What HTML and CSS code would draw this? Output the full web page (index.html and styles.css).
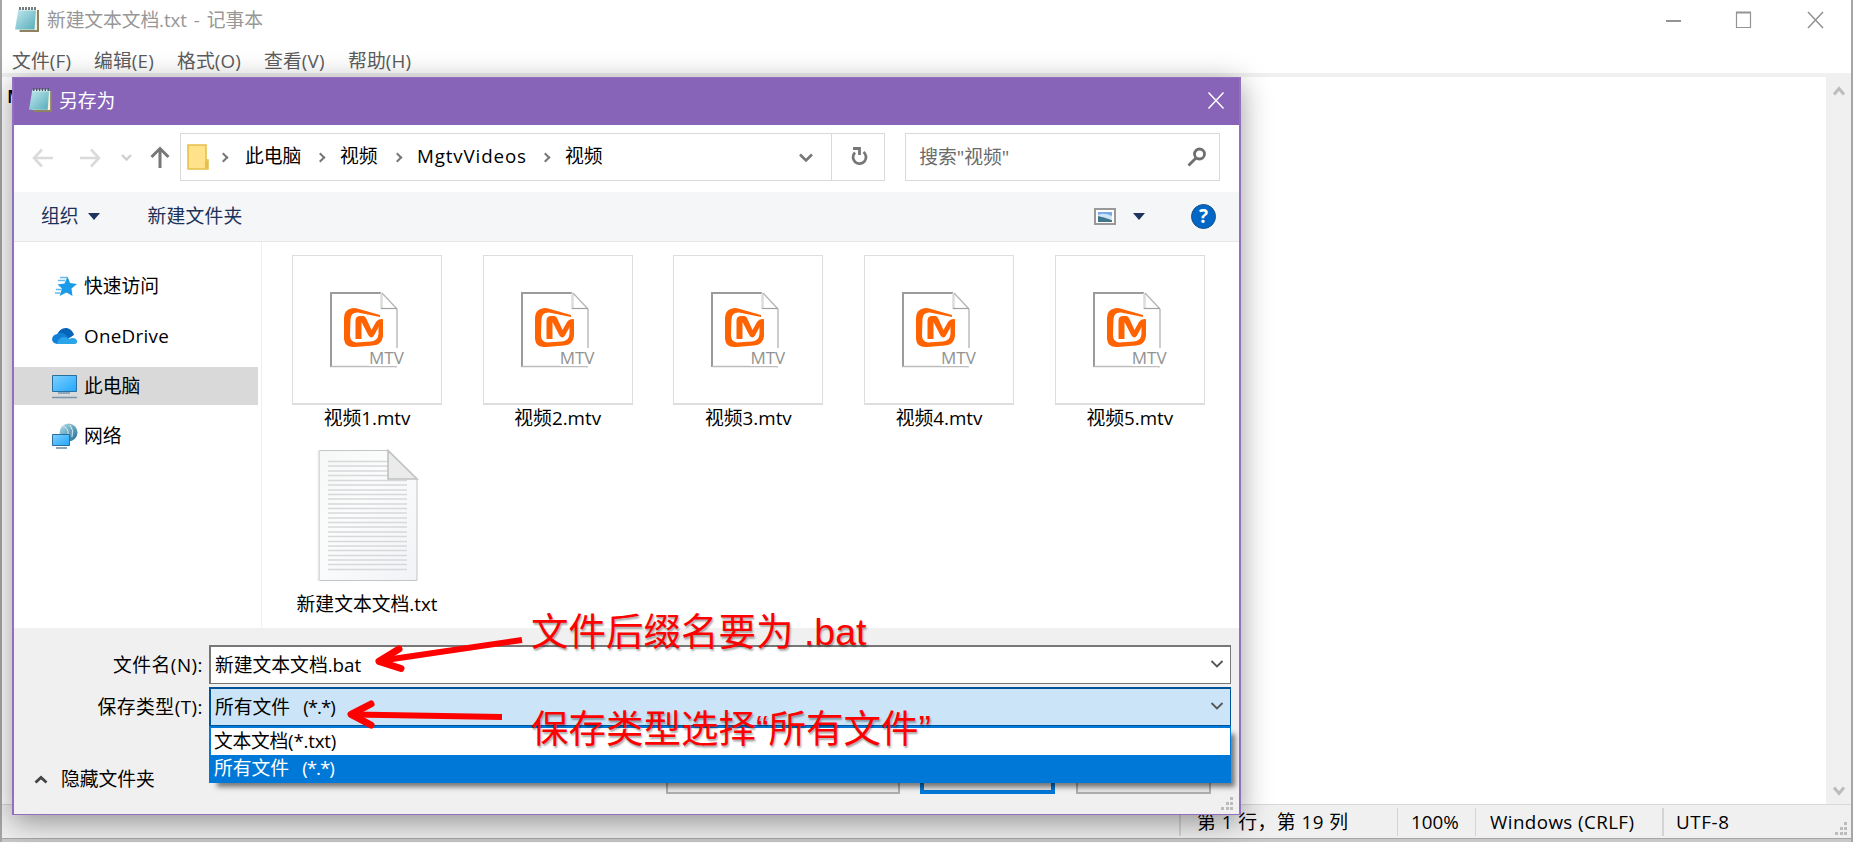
FILE: index.html
```html
<!DOCTYPE html>
<html lang="zh-CN">
<head>
<meta charset="utf-8">
<title>新建文本文档.txt - 记事本</title>
<link rel="stylesheet" href="styles.css">
</head>
<body>
<svg class="defs" width="0" height="0">
  <linearGradient id="pad" x1="0" x2="1" y1="0" y2="1"><stop offset="0" stop-color="#c4e9ee"/><stop offset="1" stop-color="#56adbb"/></linearGradient>
  <linearGradient id="scr" x1="0" x2="1" y1="0" y2="1"><stop offset="0" stop-color="#7fd0ff"/><stop offset="1" stop-color="#22a7fb"/></linearGradient>
  <linearGradient id="paper" x1="0" x2="1" y1="0" y2="1"><stop offset="0" stop-color="#f6f7f7"/><stop offset=".4" stop-color="#fbfcfc"/><stop offset="1" stop-color="#f1f3f6"/></linearGradient>
  <linearGradient id="globe" x1="0" x2="1" y1="0" y2="1"><stop offset="0" stop-color="#b8e3ec"/><stop offset="1" stop-color="#1b6b93"/></linearGradient>
  <symbol id="notepad" viewBox="0 0 26 26">
    <path d="M7 3h18v22H5.500z" fill="#8f8262"/>
    <path d="M7 3h16v20H4z" fill="#f3efdc"/>
    <path d="M4.500 2h17.500l-1.500 20.500H1z" fill="url(#pad)"/>
    <path d="M5 2.500h17" stroke="#eef6f6" stroke-width="2"/>
    <path d="M6 0v3M9 0v3M12 0v3M15 0v3M18 0v3M21 0v3" stroke="#46545a" stroke-width="1.500"/>
  </symbol>
  <symbol id="mtv" viewBox="0 0 80 78">
    <path d="M51 1H1v74" fill="none" stroke="#9b9b9b" stroke-width="2"/>
    <path d="M1 74.500h65v1M67 17v41" fill="none" stroke="#bdbdbd" stroke-width="1.500"/>
    <path d="M51.500 1v16" stroke="#dcdcdc" stroke-width="2.500"/>
    <path d="M52 1l15 16" stroke="#b5b5b5" stroke-width="1.200"/>
    <path d="M51 16.500h16" stroke="#a0a0a0" stroke-width="1.200"/>
    <g fill="#ff6200">
      <path d="M21 16.500Q24 15.500 29 17L50 23V25L28 20.500Q21 20 20.500 27L20 43Q20 50 26 50.500L41 49.500Q48 49 48.500 42V33L53 27V44Q52 53 43 53.500L25 55Q15 56 14 47V26Q14 18 21 16.500z"/>
      <path d="M25.500 47V28Q26 24 30 24H33.500Q35.500 24.500 36.500 27L41.500 38L46 30Q48.500 26.500 53 27L44 43.500Q41.500 47.500 38.500 43.500L31.500 30V47z"/>
    </g>
  </symbol>
</svg>

<main class="notepad">
  <header class="title">
    <svg class="title-icon" width="26" height="26"><use href="#notepad"/></svg>
    <span class="title-text">新建文本文档.txt<span class="dash">-</span>记事本</span>
    <svg class="win-controls" width="170" height="20" fill="none" stroke="#949494">
      <path d="M6 11h15" stroke-width="2"/><path d="M76.500 17.500V2.500h14v15z" stroke-width="1.200"/><path d="M76 2.500h15" stroke-width="2"/><path d="M148 2l15 16M163 2l-15 16" stroke-width="1.600"/>
    </svg>
  </header>
  <nav class="menu"><span>文件(F)</span><span>编辑(E)</span><span>格式(O)</span><span>查看(V)</span><span>帮助(H)</span></nav>
  <section class="editor">
    <div class="doc">M</div>
    <div class="scroll">
      <svg width="12" height="11" fill="none" stroke="#bcbcbc" stroke-width="3"><path d="M1 9.500l5-6 5 6"/></svg>
      <svg width="12" height="11" fill="none" stroke="#bcbcbc" stroke-width="3"><path d="M1 1.500l5 6 5-6"/></svg>
    </div>
  </section>
  <footer class="status"><span class="pos">第 1 行，第 19 列</span><span class="zoom">100%</span><span class="eol">Windows (CRLF)</span><span class="enc">UTF-8</span>
    <svg class="grip" width="13" height="13" fill="#bcbcbc"><path d="M9 0h3v3H9zM5 5h3v3H5zM9 5h3v3H9zM0 10h3v3H0zM5 10h3v3H5zM9 10h3v3H9z"/></svg>
  </footer>
</main>

<section class="dialog">
  <header class="dlg-title">
    <svg width="25" height="25"><use href="#notepad"/></svg><span>另存为</span>
    <svg class="dlg-close" width="16" height="17" stroke="#fff" stroke-width="1.500"><path d="M.500 .500l15 16M15.500 .500l-15 16"/></svg>
  </header>
  <div class="address-row">
    <svg class="arrows" width="140" height="24" fill="none">
      <g stroke="#dadada" stroke-width="2.600"><path d="M2 12h19M10 3.500L2 12l8 8.500"/><path d="M48 12h19M59 3.500l8 8.500-8 8.500"/></g>
      <path d="M90 9l4.500 4.500L99 9" stroke="#cfcfcf" stroke-width="2.400"/>
      <path d="M128 22V3M119.500 11L128 2.500l8.500 8.500" stroke="#777" stroke-width="3"/>
    </svg>
    <div class="path">
      <svg class="folder" width="22" height="26"><path d="M1 1h18v15h2v9H1z" fill="#ffe28a" stroke="#e9bf4b" stroke-width="1.600"/><path d="M18 24v-7h3v8z" fill="#e9bf4b"/></svg>
      <i class="crumb"></i><span class="c1">此电脑</span><i class="crumb"></i><span class="c2">视频</span><i class="crumb"></i><span class="c3">MgtvVideos</span><i class="crumb"></i><span>视频</span>
      <svg class="drop" width="16" height="10" fill="none" stroke="#777" stroke-width="2.600"><path d="M2 1.500l6 6 6-6"/></svg>
    </div>
    <div class="refresh"><svg width="17" height="20" fill="none" stroke="#777" stroke-width="2.800"><path d="M12.500 5A6.500 6.500 0 1 1 4 5.500"/><path d="M2 1.500h6.500V8"/></svg></div>
    <div class="search"><span>搜索"视频"</span><svg width="20" height="20" fill="none" stroke="#6f6f6f" stroke-width="2.800"><circle cx="12.500" cy="7" r="5"/><path d="M9 11L1.500 18.500"/></svg></div>
  </div>
  <div class="toolbar">
    <span>组织</span><i class="tri"></i><span class="newdir">新建文件夹</span>
    <svg class="view" width="22" height="17"><path d="M1 1h20v15H1z" fill="#fff" stroke="#999" stroke-width="2"/><path d="M4 4h14v5H4z" fill="#76a9ee"/><path d="M4 7q5-3 14 1v3H4z" fill="#cfe4f4"/><path d="M4 8q5 1 14 4v2H4z" fill="#40758b"/></svg>
    <i class="tri view-tri"></i><b class="help">?</b>
  </div>
  <div class="browser">
    <aside class="side">
      <div class="row"><svg width="26" height="26"><path d="M15.500 3.500l2.500 6.500 7 1-5.500 4.500 1 7.500-6-3.500-7 3.500 2.500-7.500-4.500-4 7-1z" fill="#1a9bea"/><path d="M8 4.500h7M6 7.500h7M4 16.500h6M3 20h5" stroke="#65b9e9" stroke-width="1.300"/></svg>快速访问</div>
      <div class="row one"><svg width="26" height="26"><path d="M5 13C7 3 19 2 22 12l-8 5z" fill="#0864b8"/><path d="M5 21C-2 20-1 12 5 11c6-4 12 2 14 10z" fill="#127fd6"/><path d="M5 21c1-7 8-9 12-5 7-4 11 4 6 5z" fill="#2aa5ea"/></svg>OneDrive</div>
      <div class="row active"><svg width="26" height="26"><path d="M.500 2.500h24v16H.500z" fill="url(#scr)" stroke="#2a6f9d"/><path d="M6 20h12" stroke="#8ca6bb" stroke-width="2"/><path d="M0 24.500h25" stroke="#7794ad" stroke-width="1.500"/></svg>此电脑</div>
      <div class="row net"><svg width="26" height="26"><circle cx="16.500" cy="9.500" r="9" fill="url(#globe)"/><path d="M11 3q6 3 5 8M18 2q4 5 2 12" stroke="#d9f0f5" fill="none"/><path d="M.500 11.500h17v11H.500z" fill="url(#scr)" stroke="#2a6f9d"/><path d="M4 25h11" stroke="#8ca6bb" stroke-width="2"/></svg>网络</div>
    </aside>
    <div class="files">
      <figure><div class="thumb"><svg width="80" height="78"><use href="#mtv"/></svg><em>MTV</em></div><figcaption>视频1.mtv</figcaption></figure>
      <figure><div class="thumb"><svg width="80" height="78"><use href="#mtv"/></svg><em>MTV</em></div><figcaption>视频2.mtv</figcaption></figure>
      <figure><div class="thumb"><svg width="80" height="78"><use href="#mtv"/></svg><em>MTV</em></div><figcaption>视频3.mtv</figcaption></figure>
      <figure><div class="thumb"><svg width="80" height="78"><use href="#mtv"/></svg><em>MTV</em></div><figcaption>视频4.mtv</figcaption></figure>
      <figure><div class="thumb"><svg width="80" height="78"><use href="#mtv"/></svg><em>MTV</em></div><figcaption>视频5.mtv</figcaption></figure>
      <figure class="txt"><svg width="100" height="132"><path d="M1.500.500H70l29 29V130.500H1.500z" fill="url(#paper)" stroke="#c3c5c7"/><path d="M.500 0v131" stroke="#e9eaeb" stroke-width="2"/>
        <path d="M10 11.500h60M10 16h60M10 21h60M10 25.500h60M10 30.500h79M10 35h79M10 40h79M10 44.500h79M10 49h79M10 54h79M10 58.500h79M10 63h79M10 68h79M10 72.500h79M10 77h79M10 82h79M10 86.500h79M10 91.500h79M10 96h79M10 100.500h79M10 105.500h79M10 110h79M10 114.500h79M10 119.500h79" stroke="#d6d8da" stroke-width="1.400"/>
        <path d="M70 .500v28.500h29z" fill="#ebebec" stroke="#c0c1c2" stroke-width="1.600"/></svg><figcaption>新建文本文档.txt</figcaption></figure>
    </div>
  </div>
  <div class="form">
    <div class="field"><label>文件名(N):</label><div class="combo">新建文本文档.bat<svg width="14" height="9" fill="none" stroke="#555" stroke-width="1.800"><path d="M1.500 1l5.500 5.500L12.500 1"/></svg></div></div>
    <div class="field"><label>保存类型(T):</label><div class="combo open"><span>所有文件<span class="mask">(*.*)</span></span><svg width="14" height="9" fill="none" stroke="#555" stroke-width="1.800"><path d="M1.500 1l5.500 5.500L12.500 1"/></svg>
      <div class="options"><div>文本文档(*.txt)</div><div class="sel">所有文件<span class="mask">(*.*)</span></div></div>
    </div></div>
    <div class="actions">
      <svg width="14" height="9" fill="none" stroke="#444" stroke-width="2.800"><path d="M1.500 7.500l5.500-5 5.500 5"/></svg><span>隐藏文件夹</span>
      <div class="btn wide"></div><div class="btn default"></div><div class="btn"></div>
    </div>
  </div>
  <svg class="grip" width="13" height="13" fill="#bcbcbc"><path d="M9 0h3v3H9zM5 5h3v3H5zM9 5h3v3H9zM0 10h3v3H0zM5 10h3v3H5zM9 10h3v3H9z"/></svg>
</section>

<svg class="marks" width="190" height="115" fill="none" stroke="#f00" stroke-width="6"><path d="M182 20L42 40.500"/><path d="M59 29L39 41.300 61 48.500" stroke-width="7" stroke-linecap="round" stroke-linejoin="round"/><path d="M162 97L14 94.500"/><path d="M31 84L11 94.300 31 105" stroke-width="7" stroke-linecap="round" stroke-linejoin="round"/></svg>
<div class="note n1">文件后缀名要为 .bat</div>
<div class="note n2">保存类型选择“所有文件”</div>
</body>
</html>
```
FILE: styles.css
```css
* { box-sizing: border-box; }
body { margin: 0; width: 1854px; height: 843px; overflow: hidden; position: relative; background: #fff; color: #000; font: 18.8px/26px "Open Sans", "Noto Sans CJK SC", sans-serif; white-space: nowrap; }
svg { display: block; flex: none; overflow: visible; }
.defs { position: absolute; }
i { font-style: normal; }

.notepad { width: 1853px; height: 842px; display: flex; flex-direction: column; border: solid #a6a6a6; border-width: 0 2px; }
.notepad::after { content: ""; height: 3px; background: #c8c8c8; border-top: 1px solid #a6a6a6; }
.title { height: 42px; display: flex; align-items: center; padding: 0 18px 2px 12px; color: #979797; }
.title-text { margin-left: 7px; letter-spacing: -.1px; }
.dash { margin: 0 7px; }
.win-controls { margin-left: auto; margin-right: 3px; }
.menu { height: 31px; display: flex; padding: 6px 0 0 10px; color: #5c5c5c; letter-spacing: .15px; }
.menu span { width: 82px; }
.menu span:nth-child(2) { width: 83px; }
.menu span:nth-child(3) { width: 87px; }
.menu span:nth-child(4) { width: 84px; }
.editor { height: 732px; display: flex; border-top: 4px solid #f0f0f0; }
.doc { flex: 1; padding: 6px 0 0 5px; font-weight: 600; }
.scroll { width: 25px; background: #f0f0f0; display: flex; flex-direction: column; justify-content: space-between; align-items: center; padding: 8px 0 7px; }
.status { position: relative; height: 34px; display: flex; border-top: 1px solid #d7d7d7; background: #f0f0f0; padding: 3px 0 2px 1177px; line-height: 28px; font-size: 18.8px; }
.status span { border-left: 1px solid #d4d4d4; }
.status .pos { width: 218px; padding-left: 16px; border-left-width: 2px; letter-spacing: .5px; }
.status .zoom { width: 78px; padding-left: 13px; }
.status .eol { width: 187px; padding-left: 14px; letter-spacing: .4px; }
.status .enc { padding-left: 12px; border-left-width: 2px; letter-spacing: .6px; }
.status .grip { position: absolute; right: 3px; bottom: 3px; }

.dialog { position: absolute; isolation: isolate; left: 12px; top: 77px; width: 1229px; height: 738px; display: flex; flex-direction: column; background: #f0f0f0; border: solid #9270bf; border-width: 1px 2px; box-shadow: 0 7px 28px rgba(0, 0, 0, .4); }
.dlg-title { height: 47px; background: #8764b8; color: #fff; display: flex; align-items: center; padding: 0 16px 2px 14px; }
.dlg-title span { margin-left: 6px; }
.dlg-close { margin-left: auto; margin-right: -1px; }
.address-row { height: 67px; background: #fff; display: flex; padding: 8px 19px 11px 18px; }
.arrows { margin: 13px 8px 0 0; }
.path, .refresh, .search { height: 48px; border: 1px solid #d9d9d9; display: flex; align-items: center; }
.path { width: 653px; padding: 0 17px 2px 6px; }
.folder { margin: 2px 13px 0 0; }
.crumb { width: 7px; height: 7px; border: solid #777; border-width: 2.500px 2.500px 0 0; transform: rotate(45deg); margin: 3px 0 0 -2px; }
.path span { margin-left: 16px; }
.path .c1 { width: 74px; margin-left: 18px; }
.path .c2 { width: 56px; }
.path .c3 { width: 127px; letter-spacing: .85px; }
.drop { margin-left: auto; margin-top: 3px; }
.refresh { width: 54px; border-left: 1px solid #d9d9d9; margin-left: -1px; padding-left: 19px; }
.search { width: 315px; margin-left: 20px; padding: 0 12px 0 13px; justify-content: space-between; color: #6a6a6a; }
.search span { letter-spacing: -.05px; }
.toolbar { height: 50px; display: flex; align-items: center; background: #f5f6f8; border-bottom: 1px solid #e6e7e9; padding: 0 23px 1px 27px; color: #1a3159; }
.tri { border: solid transparent; border-top-color: #1e3460; border-width: 7px 6.500px 0; margin-left: 9px; }
.newdir { margin-left: 48px; letter-spacing: .2px; }
.view { margin-left: auto; }
.view-tri { margin-left: 17px; }
.help { margin-left: 46px; width: 25px; height: 25px; border-radius: 50%; border: 1px solid #17518e; background: #0067c6; color: #fff; text-align: center; line-height: 23px; font-size: 19px; }
.browser { height: 386px; display: flex; background: #fff; }
.side { flex: none; width: 248px; border-right: 1px solid #f0f0f0; padding-top: 25px; }
.row { height: 38px; width: 244px; display: flex; align-items: center; gap: 6px; padding-left: 38px; margin-bottom: 12px; }
.row.active { background: #d9d9d9; }
.row.one { letter-spacing: .3px; }
.files { flex: 1; min-width: 0; padding: 13px 0 0 30px; display: grid; grid-template-columns: repeat(5, 190.700px); grid-template-rows: 195px 180px; }
figure { margin: 0; width: 150px; text-align: center; }
.thumb { position: relative; width: 150px; height: 150px; border: 1px solid #dedede; border-bottom-width: 2px; padding: 36px 0 0 37px; }
.thumb em { position: absolute; left: 76px; top: 92px; font: 17px/20px "Open Sans", sans-serif; color: #929292; background: #fff; height: 18px; }
figcaption { height: 26px; }
.txt svg { margin-left: 26px; }
.txt figcaption { margin: 9px -20px 0; }
.form { padding: 17px 8px 0 0; }
.field { display: flex; height: 39px; margin-bottom: 3px; }
.field label { width: 195px; padding: 7px 6px 0 0; text-align: right; letter-spacing: .5px; }
.combo { position: relative; flex: 1; background: #fff; border: 1px solid #777; border-top-width: 2px; border-left-width: 2px; display: flex; justify-content: space-between; align-items: center; padding: 0 6px 1px 4px; }
.combo.open { background: #cce4f7; border-color: #00549a; z-index: 2; }
.mask { margin-left: 13px; letter-spacing: -1px; }
.options { position: absolute; left: -2px; right: -1px; top: 37px; height: 57px; background: #fff; border: 2px solid #0078d7; border-right-width: 1px; border-top-width: 2px; box-shadow: 6px 6px 5px -2px rgba(0, 0, 0, .5); }
.options div { height: 27px; padding-left: 3px; line-height: 27px; }
.options div:first-child { letter-spacing: -.25px; }
.options .sel { height: 28px; background: #0078d7; color: #fff; }
.actions { display: flex; align-items: center; padding-left: 20px; height: 66px; margin-top: 20px; }
.actions span { margin-left: 13px; width: 605px; flex: none; }
.btn { height: 48px; width: 135px; margin: -19px 21px 0 0; border: 2px solid #adadad; background: #e5e5e5; flex: none; }
.btn.wide { width: 234px; margin-right: 20px; background: #e8e8e8; }
.btn.default { border: 4px solid #0078d7; }
.dialog > .grip { position: absolute; right: 5px; bottom: 4px; }

.marks { position: absolute; left: 340px; top: 620px; }
.note { position: absolute; left: 531px; color: #f00; font: 37.500px/48px "Liberation Sans", "Noto Sans CJK SC", sans-serif; text-shadow: 1px 2px 2px rgba(0, 0, 0, .35); }
.n1 { top: 608px; }
.n2 { top: 705px; }
```
